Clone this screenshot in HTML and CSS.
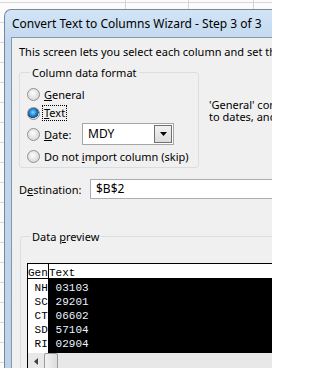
FILE: index.html
```html
<!DOCTYPE html>
<html>
  <head>
    <link rel="stylesheet" href="styles.css">
  </head>
  <body>
    <div class="sheet">
      <div class="dialog">
        <div class="titlebar">Convert Text to Columns Wizard - Step 3 of 3</div>
        <div class="client">
          <p class="intro">This screen lets you select each column and set the Data Format.</p>
          <div class="format-row">
            <fieldset class="group format">
              <legend>Column data format</legend>
              <label class="radio general"><span class="dot"></span><span><u>G</u>eneral</span></label>
              <label class="radio text"><span class="dot checked"></span><span class="focus"><u>T</u>ext</span></label>
              <label class="radio date">
                <span class="dot"></span><span class="date-label"><u>D</u>ate:</span>
                <span class="combo"><span class="combo-value">MDY</span><span class="combo-btn"><svg width="7" height="4" viewBox="0 0 7 4"><path d="M0 0h7L3.5 4z" fill="#000"/></svg></span></span>
              </label>
              <label class="radio skip"><span class="dot"></span><span>Do not <u>i</u>mport column (skip)</span></label>
            </fieldset>
            <p class="note">'General' converts numeric values to numbers, date values to dates, and all remaining values to text.</p>
          </div>
          <div class="dest-row">
            <span class="dest-label">D<u>e</u>stination:</span>
            <div class="dest-input">$B$2</div>
          </div>
          <fieldset class="group preview">
            <legend>Data <u>p</u>review</legend>
            <div class="grid">
              <div class="col col-gen">
                <div class="head">Gen</div>
                <div class="cells">
                  <div> NH</div>
                  <div> SC</div>
                  <div> CT</div>
                  <div> SD</div>
                  <div> RI</div>
                </div>
              </div>
              <div class="col col-text">
                <div class="head">Text</div>
                <div class="cells">
                  <div> 03103</div>
                  <div> 29201</div>
                  <div> 06602</div>
                  <div> 57104</div>
                  <div> 02904</div>
                </div>
              </div>
            </div>
            <div class="hscroll">
              <span class="arrow"><svg width="4" height="7" viewBox="0 0 4 7"><path d="M4 0v7L0 3.5z" fill="#404040"/></svg></span>
              <span class="thumb"></span>
            </div>
          </fieldset>
        </div>
      </div>
    </div>
  </body>
</html>
```

FILE: styles.css
```css
body {
  margin: 0;
  background: #fff;
  font-family: "Noto Sans", sans-serif;
  font-size: 11px;
  color: #000;
}
.sheet {
  width: 272px;
  height: 368px;
  overflow: hidden;
  background-color: #fbfbfb;
  background-image:
    linear-gradient(90deg, transparent 125px, #d4d4d4 125px, #d4d4d4 126px, transparent 126px),
    linear-gradient(90deg, transparent 188px, #d4d4d4 188px, #d4d4d4 189px, transparent 189px),
    linear-gradient(90deg, transparent 253px, #d4d4d4 253px, #d4d4d4 254px, transparent 254px),
    repeating-linear-gradient(180deg, transparent 0, transparent 2px, #d8d8d8 2px, #d8d8d8 3px, transparent 3px, transparent 20px);
  padding-top: 9px;
  box-sizing: border-box;
}
.dialog {
  margin-left: 4px;
  width: 280px;
  height: 370px;
  border: 1px solid #7a8896;
  border-right: none;
  border-radius: 7px 0 0 0;
  padding-left: 6px;
  background: linear-gradient(180deg, #d3e4f6 0, #c2d8ef 30px, #bcd3ec 100%);
  box-sizing: border-box;
}
.titlebar {
  height: 27px;
  line-height: 27px;
  padding-left: 1px;
  font-size: 12px;
  white-space: nowrap;
}
.client {
  border-top: 1px solid #8597ab;
  border-left: 1px solid #8597ab;
  background: #f0f0f0;
  height: 340px;
  padding: 6px 0 0 7px;
  overflow: hidden;
  box-sizing: border-box;
}
.intro {
  margin: 0;
  line-height: 15px;
  white-space: nowrap;
}
.format-row {
  display: flex;
  margin-top: 6px;
}
.group {
  margin: 0;
  border: 1px solid #d5dfe5;
  border-radius: 3px;
  min-width: 0;
}
.group legend {
  padding: 0 2px;
  margin-left: 3px;
  line-height: 15px;
}
.format {
  flex: none;
  width: 180px;
  box-sizing: border-box;
  padding: 4px 0 1px 7px;
}
.radio {
  display: flex;
  align-items: center;
  gap: 4px;
  white-space: nowrap;
}
.general { height: 20px; }
.text { height: 18px; }
.date { height: 24px; }
.skip { height: 20px; }
.dot {
  width: 13px;
  height: 13px;
  box-sizing: border-box;
  border: 1px solid #8f9092;
  border-radius: 50%;
  background: radial-gradient(circle at 45% 40%, #ffffff 0, #e6e6e6 45%, #cfcfcf 100%);
}
.dot.checked {
  background:
    radial-gradient(circle at 45% 40%, #8fd5ff 0, #2a8ad4 35%, #0b4d86 62%, transparent 64%),
    radial-gradient(circle, #f4f4f4 0, #d8d8d8 100%);
}
.focus {
  outline: 1px dotted #000;
  outline-offset: 0;
  padding: 0 1px;
  margin-left: -1px;
  line-height: 14px;
}
.date-label {
  width: 34px;
}
.combo {
  display: flex;
  width: 92px;
  height: 22px;
  box-sizing: border-box;
  border: 1px solid #a6a6a6;
  background: #fff;
  padding: 1px;
}
.combo-value {
  flex: 1;
  padding-left: 4px;
  line-height: 18px;
  font-size: 12px;
}
.combo-btn {
  width: 16px;
  border: 1px solid #707070;
  background: linear-gradient(180deg, #f2f2f2, #dcdcdc);
  display: flex;
  align-items: center;
  justify-content: center;
}
.note {
  flex: none;
  width: 310px;
  margin: 34px 0 0 10px;
  line-height: 12px;
}
.dest-row {
  display: flex;
  align-items: center;
  margin-top: 11px;
  height: 20px;
}
.dest-label {
  width: 71px;
}
.dest-input {
  flex: 1;
  height: 20px;
  box-sizing: border-box;
  border: 1px solid #abadb3;
  background: #fff;
  padding-left: 5px;
  line-height: 18px;
  font-size: 12px;
}
.preview {
  margin: 30px 0 0 1px;
  padding: 19px 0 0 6px;
  height: 160px;
}
.grid {
  display: flex;
  border-top: 1px solid #000;
  border-left: 1px solid #000;
  font-family: "Liberation Mono", monospace;
  font-size: 11px;
  background: #fff;
}
.col-gen {
  width: 20px;
  overflow: hidden;
  border-right: 1px solid #000;
}
.col-text {
  flex: 1;
}
.head {
  height: 14px;
  line-height: 19px;
  overflow: hidden;
  white-space: pre;
  border-bottom: 1px solid #000;
}
.cells {
  padding: 2px 0;
  line-height: 14px;
}
.cells div {
  height: 14px;
  white-space: pre;
}
.col-text .cells {
  background: #000;
  color: #e8f4ff;
}
.hscroll {
  display: flex;
  height: 17px;
  background: #e8e8e8;
  border-left: 1px solid #000;
}
.arrow {
  width: 16px;
  display: flex;
  align-items: center;
  justify-content: center;
}
.thumb {
  width: 14px;
  box-sizing: border-box;
  border: 1px solid #9a9a9a;
  border-radius: 2px;
  background: linear-gradient(90deg, #f2f2f2, #dcdcdc);
}
```
